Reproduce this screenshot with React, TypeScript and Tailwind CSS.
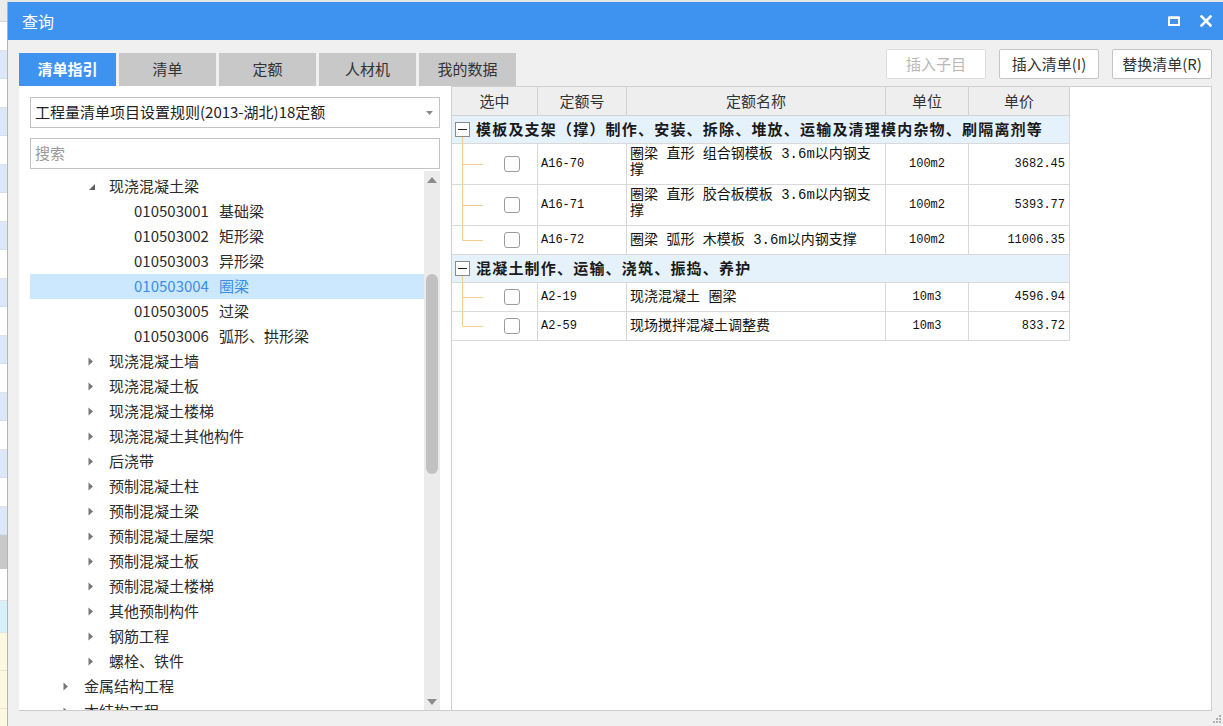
import React from 'react';

type TreeRow = {
  level: number;
  label: string;
  code?: string;
  state?: 'open' | 'closed';
  selected?: boolean;
};

const treeRows: TreeRow[] = [
  { level: 2, label: '现浇混凝土梁', state: 'open' },
  { level: 3, code: '010503001', label: '基础梁' },
  { level: 3, code: '010503002', label: '矩形梁' },
  { level: 3, code: '010503003', label: '异形梁' },
  { level: 3, code: '010503004', label: '圈梁', selected: true },
  { level: 3, code: '010503005', label: '过梁' },
  { level: 3, code: '010503006', label: '弧形、拱形梁' },
  { level: 2, label: '现浇混凝土墙', state: 'closed' },
  { level: 2, label: '现浇混凝土板', state: 'closed' },
  { level: 2, label: '现浇混凝土楼梯', state: 'closed' },
  { level: 2, label: '现浇混凝土其他构件', state: 'closed' },
  { level: 2, label: '后浇带', state: 'closed' },
  { level: 2, label: '预制混凝土柱', state: 'closed' },
  { level: 2, label: '预制混凝土梁', state: 'closed' },
  { level: 2, label: '预制混凝土屋架', state: 'closed' },
  { level: 2, label: '预制混凝土板', state: 'closed' },
  { level: 2, label: '预制混凝土楼梯', state: 'closed' },
  { level: 2, label: '其他预制构件', state: 'closed' },
  { level: 2, label: '钢筋工程', state: 'closed' },
  { level: 2, label: '螺栓、铁件', state: 'closed' },
  { level: 1, label: '金属结构工程', state: 'closed' },
  { level: 1, label: '木结构工程', state: 'closed' },
];

type Quota = {
  code: string;
  name: React.ReactNode;
  unit: string;
  price: string;
  tall?: boolean;
  last?: boolean;
};

const groups: { title: string; items: Quota[] }[] = [
  {
    title: '模板及支架（撑）制作、安装、拆除、堆放、运输及清理模内杂物、刷隔离剂等',
    items: [
      { code: 'A16-70', name: <>圈梁 直形 组合钢模板 3.6m以内钢支<br />撑</>, unit: '100m2', price: '3682.45', tall: true },
      { code: 'A16-71', name: <>圈梁 直形 胶合板模板 3.6m以内钢支<br />撑</>, unit: '100m2', price: '5393.77', tall: true },
      { code: 'A16-72', name: '圈梁 弧形 木模板 3.6m以内钢支撑', unit: '100m2', price: '11006.35', last: true },
    ],
  },
  {
    title: '混凝土制作、运输、浇筑、振捣、养护',
    items: [
      { code: 'A2-19', name: '现浇混凝土 圈梁', unit: '10m3', price: '4596.94' },
      { code: 'A2-59', name: '现场搅拌混凝土调整费', unit: '10m3', price: '833.72', last: true },
    ],
  },
];

const tabs = ['清单指引', '清单', '定额', '人材机', '我的数据'];

// the window behind the dialog, only a sliver of it shows
function BackStrip() {
  return (
    <div className="flex w-[7px] shrink-0 flex-col overflow-hidden bg-white">
      <div className="h-[22px] shrink-0 border-b border-[#d6d6d6] bg-[#ececec]" />
      {Array.from({ length: 9 }).map((_, i) => (
        <div key={i} className="flex shrink-0 flex-col">
          <div className="h-[29px] border-b border-[#e2e2e2] bg-white" />
          <div className="h-[28px] border-b border-[#d4dff0] bg-[#dce8f8]" />
        </div>
      ))}
      <div className="h-[34px] shrink-0 bg-[#c9c9c9]" />
      <div className="h-[32px] shrink-0 border-b border-[#e2e2e2] bg-white" />
      <div className="h-[32px] shrink-0 border-b border-[#d9e6e6] bg-[#d7f1fb]" />
      <div className="h-[38px] shrink-0 border-b border-[#e9e3c8] bg-[#fdf8df]" />
      <div className="h-[38px] shrink-0 border-b border-[#e9e3c8] bg-[#fdf8df]" />
      <div className="flex-1 bg-[#fdf8df]" />
    </div>
  );
}

function TitleBar() {
  return (
    <div className="flex h-[38px] shrink-0 items-center bg-[#3e92f0] pl-[14px] pr-[11px]">
      <span className="text-[16px] text-white">查询</span>
      <div className="ml-auto flex items-center gap-[20px]">
        <svg width="12" height="10" viewBox="0 0 12 10">
          <rect x="1" y="1.5" width="10" height="7.5" fill="none" stroke="white" strokeWidth="2" />
          <rect x="1" y="0.5" width="10" height="2.5" fill="white" />
        </svg>
        <svg width="12" height="12" viewBox="0 0 12 12">
          <path d="M1.5 1.5 L10.5 10.5 M10.5 1.5 L1.5 10.5" stroke="white" strokeWidth="2.6" strokeLinecap="square" />
        </svg>
      </div>
    </div>
  );
}

function Toolbar() {
  return (
    <div className="flex h-[46px] shrink-0">
      <div className="flex items-end gap-[3px] self-end">
        {tabs.map((t, i) => (
          <div
            key={t}
            className={
              i === 0
                ? 'flex h-[33px] w-[97px] items-center justify-center bg-[#3e92f0] text-[15px] font-bold text-white'
                : 'flex h-[33px] w-[97px] items-center justify-center bg-[#c8c8c8] text-[15px] text-[#333]'
            }
          >
            {t}
          </div>
        ))}
      </div>
      <div className="ml-auto mt-[9px] flex gap-[13px]">
        <button className="h-[30px] w-[100px] rounded-[2px] border border-[#dcdcdc] bg-white text-[15px] text-[#b8b8b8]">插入子目</button>
        <button className="h-[30px] w-[100px] rounded-[2px] border border-[#c6c6c6] bg-white text-[15px] text-[#333]">插入清单(I)</button>
        <button className="h-[30px] w-[100px] rounded-[2px] border border-[#c6c6c6] bg-white text-[15px] text-[#333]">替换清单(R)</button>
      </div>
    </div>
  );
}

function Triangle({ state }: { state?: 'open' | 'closed' }) {
  if (state === 'open') {
    return (
      <svg width="8" height="8" viewBox="0 0 8 8">
        <polygon points="7,1 7,7 1,7" fill="#5f5f5f" />
      </svg>
    );
  }
  if (state === 'closed') {
    return (
      <svg width="6" height="9" viewBox="0 0 6 9">
        <polygon points="0.5,0.5 5,4.5 0.5,8.5" fill="#777" />
      </svg>
    );
  }
  return null;
}

function TreePanel() {
  return (
    <div className="flex w-[432px] shrink-0 flex-col border-b border-[#cdcdcd] bg-white px-[11px] pt-[11px]">
      <div className="flex h-[31px] shrink-0 items-center border border-[#c3c3c3] bg-white pl-[4px] pr-[6px] text-[15px] text-[#222]">
        <span>工程量清单项目设置规则(2013-湖北)18定额</span>
        <svg width="7" height="4" viewBox="0 0 7 4" className="ml-auto">
          <polygon points="0,0 7,0 3.5,4" fill="#8a8a8a" />
        </svg>
      </div>
      <div className="mt-[10px] flex h-[31px] shrink-0 items-center border border-[#c3c3c3] bg-white pl-[4px] text-[15px] text-[#9a9a9a]">
        搜索
      </div>
      <div className="mt-[2px] flex min-h-0 flex-1">
        <div className="min-w-0 flex-1 overflow-hidden pt-[3px]">
          {treeRows.map((r, i) => (
            <div
              key={i}
              className={
                r.selected
                  ? 'flex h-[25px] items-center bg-[#cce8ff] text-[15px] text-[#3a8de6]'
                  : 'flex h-[25px] items-center text-[15px] text-[#2b2b2b]'
              }
              style={{ paddingLeft: 33 + (r.level - 1) * 25 }}
            >
              <span className="flex w-[21px] shrink-0 items-center">
                <Triangle state={r.state} />
              </span>
              {r.code && <span className="mr-[10px]">{r.code}</span>}
              <span>{r.label}</span>
            </div>
          ))}
        </div>
        <div className="flex w-[16px] shrink-0 flex-col items-center bg-[#ebebeb]">
          <svg width="10" height="6" viewBox="0 0 10 6" className="mt-[6px]">
            <polygon points="0,6 10,6 5,0" fill="#8c8c8c" />
          </svg>
          <div className="mt-[91px] h-[200px] w-[12px] rounded-[6px] bg-[#c1c1c1]" />
          <svg width="10" height="6" viewBox="0 0 10 6" className="mb-[5px] mt-auto">
            <polygon points="0,0 10,0 5,6" fill="#8c8c8c" />
          </svg>
        </div>
      </div>
    </div>
  );
}

const line = '#f2cd8d';

function SelectCell({ last, h }: { last?: boolean; h: number }) {
  const mid = h / 2;
  return (
    <div className="relative flex w-[86px] shrink-0 items-center border-r border-[#d9d9d9]">
      <svg width="86" height={h} className="absolute left-0 top-0">
        <line x1="10.5" y1="0" x2="10.5" y2={last ? mid : h} stroke={line} strokeWidth="1" />
        <line x1="10.5" y1={mid + 0.5} x2="31" y2={mid + 0.5} stroke={line} strokeWidth="1" />
      </svg>
      <div className="ml-[52px] h-[16px] w-[16px] rounded-[3px] border border-[#9c9c9c] bg-white" />
    </div>
  );
}

function QuotaTable() {
  return (
    <div className="w-[618px] font-['Liberation_Mono','Noto_Sans_CJK_SC',monospace] text-[#111]">
      <div className="flex h-[29px] border-b border-[#d2d2d2] bg-[#eeeeee] font-['Microsoft_YaHei','Noto_Sans_CJK_SC',sans-serif] text-[15px] text-[#333]">
        <div className="flex w-[86px] items-center justify-center border-r border-[#d2d2d2]">选中</div>
        <div className="flex w-[89px] items-center justify-center border-r border-[#d2d2d2]">定额号</div>
        <div className="flex w-[259px] items-center justify-center border-r border-[#d2d2d2]">定额名称</div>
        <div className="flex w-[83px] items-center justify-center border-r border-[#d2d2d2]">单位</div>
        <div className="flex w-[101px] items-center justify-center border-r border-[#d2d2d2]">单价</div>
      </div>
      {groups.map((g) => (
        <div key={g.title}>
          <div className="relative flex h-[28px] items-center border-b border-r border-[#d9d9d9] bg-[#e5f1fb]">
            <svg width="20" height="28" className="absolute left-0 top-0">
              <line x1="10.5" y1="21" x2="10.5" y2="28" stroke={line} strokeWidth="1" />
            </svg>
            <div className="relative ml-[3px] flex h-[15px] w-[15px] items-center justify-center border border-[#8a8a8a] bg-white">
              <div className="h-[1.5px] w-[9px] bg-[#222]" />
            </div>
            <span className="ml-[6px] font-['Noto_Sans_CJK_SC',sans-serif] text-[15px] font-bold tracking-[1.2px] text-[#1a1a1a]">{g.title}</span>
          </div>
          {g.items.map((q) => {
            const h = q.tall ? 41 : 29;
            return (
              <div key={q.code} className="flex border-b border-[#d9d9d9]" style={{ height: h }}>
                <SelectCell last={q.last} h={h - 1} />
                <div className="flex w-[89px] items-center border-r border-[#d9d9d9] pl-[3px] text-[12px]">{q.code}</div>
                <div
                  className={
                    q.tall
                      ? 'w-[259px] border-r border-[#d9d9d9] pl-[3px] pt-[2px] text-[14px] leading-[16px]'
                      : 'flex w-[259px] items-center border-r border-[#d9d9d9] pl-[3px] text-[14px]'
                  }
                >
                  {q.name}
                </div>
                <div className="flex w-[83px] items-center justify-center border-r border-[#d9d9d9] text-[12px]">{q.unit}</div>
                <div className="flex w-[101px] items-center justify-end border-r border-[#d9d9d9] pr-[4px] text-[12px]">{q.price}</div>
              </div>
            );
          })}
        </div>
      ))}
    </div>
  );
}

export default function App() {
  return (
    <div className="flex h-[726px] w-[1223px] overflow-hidden bg-[#e6e6e6] font-['Microsoft_YaHei','Noto_Sans_CJK_SC',sans-serif] text-[#333]">
      <BackStrip />
      <div className="mt-[2px] flex min-w-0 flex-1 flex-col border-l border-[#b4b4b4] bg-[#f0f0f0]">
        <TitleBar />
        <div className="flex min-h-0 flex-1 flex-col px-[11px]">
          <Toolbar />
          <div className="flex h-[625px] shrink-0">
            <TreePanel />
            <div className="min-w-0 flex-1 border border-[#cfcfcf] bg-white">
              <QuotaTable />
            </div>
          </div>
          <div className="flex flex-1 items-end justify-end">
            <svg width="10" height="10" viewBox="0 0 10 10" className="mb-[2px] mr-[-10px]">
              <rect x="7" y="1" width="2" height="2" fill="#b0b0b0" />
              <rect x="4" y="4" width="2" height="2" fill="#b0b0b0" />
              <rect x="7" y="4" width="2" height="2" fill="#b0b0b0" />
              <rect x="1" y="7" width="2" height="2" fill="#b0b0b0" />
              <rect x="4" y="7" width="2" height="2" fill="#b0b0b0" />
              <rect x="7" y="7" width="2" height="2" fill="#b0b0b0" />
            </svg>
          </div>
        </div>
      </div>
    </div>
  );
}
